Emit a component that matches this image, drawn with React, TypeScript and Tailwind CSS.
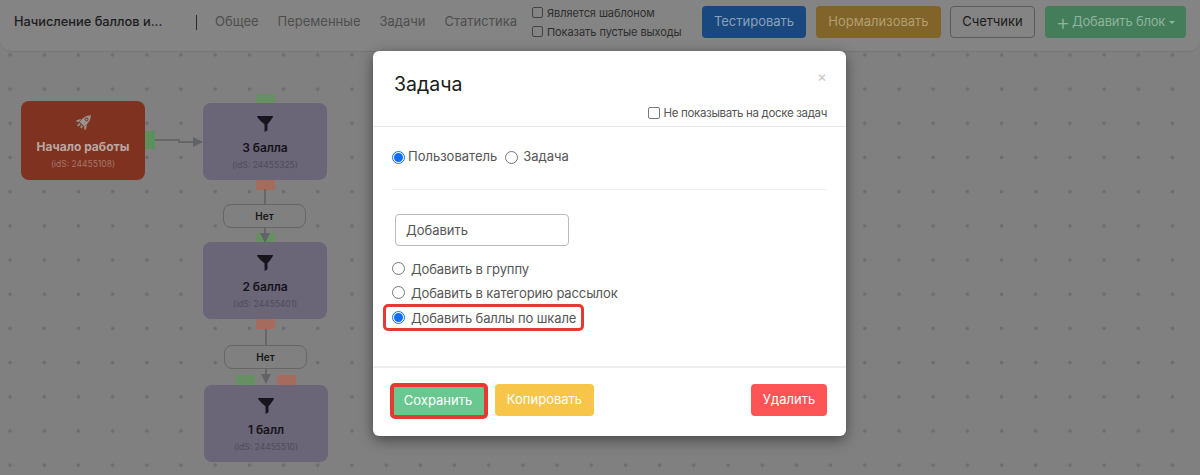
const font = "font-['Inter','Noto_Sans',sans-serif]";

const Port = ({ className }: { className: string }) => <div className={`absolute h-[10px] w-[19px] ${className}`} />;

const Funnel = () => (
  <svg viewBox="0 0 16 16" className="h-[16px] w-[16px] text-[#16141c]" fill="currentColor">
    <path d="M0 0H16C16 1.2 14.5 3.6 10.5 8.3V14.2L7.6 16L7.5 8.3C2 3.6 0 1.2 0 0Z" />
  </svg>
);

const Rocket = () => (
  <svg viewBox="0 0 18 18" className="h-[18px] w-[18px] text-[#9a9390]" fill="currentColor">
    <g transform="rotate(45 9 9)">
      <path d="M9 -2C12.2 1 13 5 12.4 10.5H5.6C5 5 5.8 1 9 -2Z" />
      <circle cx="9" cy="4" r="1.9" fill="#7f3220" />
      <circle cx="9" cy="4" r="1" />
      <path d="M5 7.5L2.6 11V13L5.4 11.2ZM13 7.5L15.4 11V13L12.6 11.2Z" />
      <path d="M6.3 11.4H8.4V15H6.3ZM9.6 11.4H11.7V14H9.6Z" opacity="0.85" />
    </g>
  </svg>
);

const FilterNode = ({ title, ids, className }: { title: string; ids: string; className: string }) => (
  <div className={`absolute flex h-[77px] w-[124px] flex-col items-center rounded-lg bg-[#6a6577] pt-[13px] ${className}`}>
    <Funnel />
    <div className="mt-[8px] text-[12px] leading-[16px] font-semibold tracking-[-0.1px] text-[#15131a]">{title}</div>
    <div className="mt-[3px] text-[8.5px] leading-[12px] text-[#4f4c5a]">{ids}</div>
  </div>
);

const EdgeLabel = ({ className }: { className: string }) => (
  <div className={`absolute flex h-[24px] w-[83px] items-center justify-center rounded-lg border border-[#666] bg-[#808080] text-[10px] font-semibold text-[#141414] ${className}`}>
    Нет
  </div>
);

const Arrow = ({ className }: { className: string }) => (
  <div className={`absolute h-0 w-0 border-x-[5px] border-t-[10px] border-x-transparent border-t-[#62626a] ${className}`} />
);

const Canvas = () => (
  <div className="relative h-[423px] overflow-hidden bg-[radial-gradient(#6e6e6e_1.8px,transparent_2.1px)] bg-[size:34.2px_34.2px] bg-[position:-7px_20px]">
    {/* start node */}
    <div className="absolute top-[49px] left-[21px] flex h-[79px] w-[124px] flex-col items-center rounded-lg bg-[#7f3220] pt-[13px]">
      <Rocket />
      <div className="mt-[7px] text-[12px] leading-[16px] font-bold text-[#b9a8a2]">Начало работы</div>
      <div className="mt-[3px] text-[8.5px] leading-[12px] text-[#a5776a]">(idS: 24455108)</div>
    </div>
    <div className="absolute top-[79px] left-[145px] h-[18px] w-[10px] bg-[#5c8f5c]" />
    <div className="absolute top-[87px] left-[155px] h-[2px] w-[25px] bg-[#666]" />
    <div className="absolute top-[89px] left-[178px] h-[2px] w-[16px] bg-[#666]" />
    <div className="absolute top-[85px] left-[193px] h-0 w-0 border-y-[5px] border-l-[10px] border-y-transparent border-l-[#62626a]" />

    <Port className="top-[42px] left-[256px] bg-[#668f62]" />
    <FilterNode title="3 балла" ids="(idS: 24455325)" className="top-[51px] left-[203px]" />
    <Port className="top-[128px] left-[256px] bg-[#a56c5d]" />
    <div className="absolute top-[137px] left-[264px] h-[15px] w-[2px] bg-[#666]" />
    <EdgeLabel className="top-[152px] left-[223px]" />

    <Port className="top-[181px] left-[256px] bg-[#668f62]" />
    <div className="absolute top-[176px] left-[264px] h-[6px] w-[2px] bg-[#666]" />
    <Arrow className="top-[181px] left-[260px]" />
    <FilterNode title="2 балла" ids="(idS: 24455401)" className="top-[190px] left-[203px]" />
    <Port className="top-[267px] left-[256px] bg-[#a56c5d]" />
    <div className="absolute top-[277px] left-[265px] h-[16px] w-[2px] bg-[#666]" />
    <EdgeLabel className="top-[293px] left-[224px]" />

    <div className="absolute top-[316px] left-[265px] h-[6px] w-[2px] bg-[#666]" />
    <Arrow className="top-[322px] left-[261px]" />
    <Port className="top-[323px] left-[236px] bg-[#668f62]" />
    <Port className="top-[323px] left-[277px] bg-[#a56c5d]" />
    <FilterNode title="1 балл" ids="(idS: 24455510)" className="top-[333px] left-[204px]" />
  </div>
);

const Header = () => (
  <div className="flex h-[52px] items-center rounded-b-xl border-b border-[#777] bg-[#848484] pr-[14px] pb-[7px] pl-[14px] whitespace-nowrap">
    <div className="w-[182px] shrink-0 text-[12.8px] font-medium text-[#1d1d1d]">Начисление баллов и...</div>
    <div className="h-[15px] w-[1px] shrink-0 bg-[#2a2a2a]" />
    <nav className="ml-[18px] flex shrink-0 gap-[19px] text-[13px] text-[#4e4e4e]">
      <span>Общее</span>
      <span>Переменные</span>
      <span>Задачи</span>
      <span>Статистика</span>
    </nav>
    <div className="ml-[15px] flex shrink-0 flex-col gap-[5px] text-[11px] leading-[14px] tracking-[-0.07px] text-[#2e2e2e]">
      <label className="flex items-center gap-[4px]">
        <span className="h-[11px] w-[11px] rounded-[2px] border border-[#444]" />
        Является шаблоном
      </label>
      <label className="flex items-center gap-[4px]">
        <span className="h-[11px] w-[11px] rounded-[2px] border border-[#444]" />
        Показать пустые выходы
      </label>
    </div>
    <div className="ml-auto flex shrink-0 text-[13px]">
      <button className="h-[32px] w-[104px] rounded bg-[#19487f] text-[#8ba0b8]">Тестировать</button>
      <button className="ml-[10px] h-[32px] w-[125px] rounded bg-[#806429] text-[#b39f72]">Нормализовать</button>
      <button className="ml-[9px] h-[32px] w-[85px] rounded border border-[#5a5a5a] text-[#1b1b1b]">Счетчики</button>
      <button className="ml-[10px] flex h-[32px] w-[141px] items-center justify-center gap-[2px] rounded bg-[#437d5a] tracking-[-0.2px] text-[#8fb39d]">
        <span className="text-[22px] leading-none font-light">+</span>
        Добавить блок
        <span className="ml-[2px] h-0 w-0 border-x-[3px] border-t-[3px] border-x-transparent border-t-[#8fb39d]" />
      </button>
    </div>
  </div>
);

const Radio = ({ checked }: { checked?: boolean }) =>
  checked ? (
    <span className="flex h-[13px] w-[13px] shrink-0 items-center justify-center rounded-full border border-[#0d6efd]">
      <span className="h-[9px] w-[9px] rounded-full bg-[#0d6efd]" />
    </span>
  ) : (
    <span className="h-[13px] w-[13px] shrink-0 rounded-full border border-[#777]" />
  );

const Modal = () => (
  <div className="absolute top-[51px] left-[373px] flex h-[385px] w-[473px] flex-col rounded-md bg-white whitespace-nowrap shadow-[0_4px_14px_rgba(0,0,0,0.45)]">
    <div className="relative h-[76px] border-b border-[#e9e9ec] pt-[20px] pl-[21px]">
      <h2 className="text-[19.5px] leading-[26px] font-normal text-[#1a1a1a]">Задача</h2>
      <span className="absolute top-[16px] right-[19px] text-[15px] leading-[20px] text-[#c8c8c8]">×</span>
      <label className="absolute right-[19px] bottom-[5px] flex items-center gap-[3px] text-[11.5px] leading-[16px] tracking-[-0.33px] text-[#555]">
        <span className="mr-[1px] h-[12px] w-[12px] rounded-[2px] border border-[#777]" />
        Не показывать на доске задач
      </label>
    </div>
    <div className="flex-1 px-[19px]">
      <div className="flex h-[63px] items-center border-b border-[#eee] pb-[2px] text-[13px] text-[#555]">
        <Radio checked />
        <span className="ml-[3px]">Пользователь</span>
        <span className="ml-[8px] flex"><Radio /></span>
        <span className="ml-[5px]">Задача</span>
      </div>
      <button className="mt-[24px] ml-[3px] block h-[32px] w-[174px] rounded border border-[#bbb] pt-[1px] pl-[10px] text-left text-[13px] text-[#555]">
        Добавить
      </button>
      <div className="mt-[10px] flex flex-col text-[13px] tracking-[-0.12px] text-[#555]">
        <div className="flex h-[24px] items-center gap-[6px]">
          <Radio />
          <span className="pt-[3px]">Добавить в группу</span>
        </div>
        <div className="flex h-[24px] items-center gap-[6px]">
          <Radio />
          <span className="pt-[3px]">Добавить в категорию рассылок</span>
        </div>
        <div className="-ml-[9px] flex h-[27px] w-[201px] items-center gap-[6px] rounded-[5px] border-[3px] border-[#e53a30] pl-[6px]">
          <Radio checked />
          <span className="pt-[2px]">Добавить баллы по шкале</span>
        </div>
      </div>
    </div>
    <div className="flex h-[70px] items-start border-t-2 border-[#eee] pt-[16px] pr-[19px] pl-[17px] text-[13px] text-white">
      <button className="-mt-[1px] h-[36px] w-[98px] rounded-[5px] border-[4px] border-[#e53a30] bg-[#68c890] pr-[2px]">Сохранить</button>
      <button className="ml-[7px] h-[32px] w-[99px] rounded bg-[#f7c548]">Копировать</button>
      <button className="ml-auto h-[32px] w-[76px] rounded bg-[#fd5555]">Удалить</button>
    </div>
  </div>
);

export default function App() {
  return (
    <div className={`relative h-[475px] w-[1200px] overflow-hidden bg-[#808080] ${font}`}>
      <Header />
      <Canvas />
      <Modal />
    </div>
  );
}
